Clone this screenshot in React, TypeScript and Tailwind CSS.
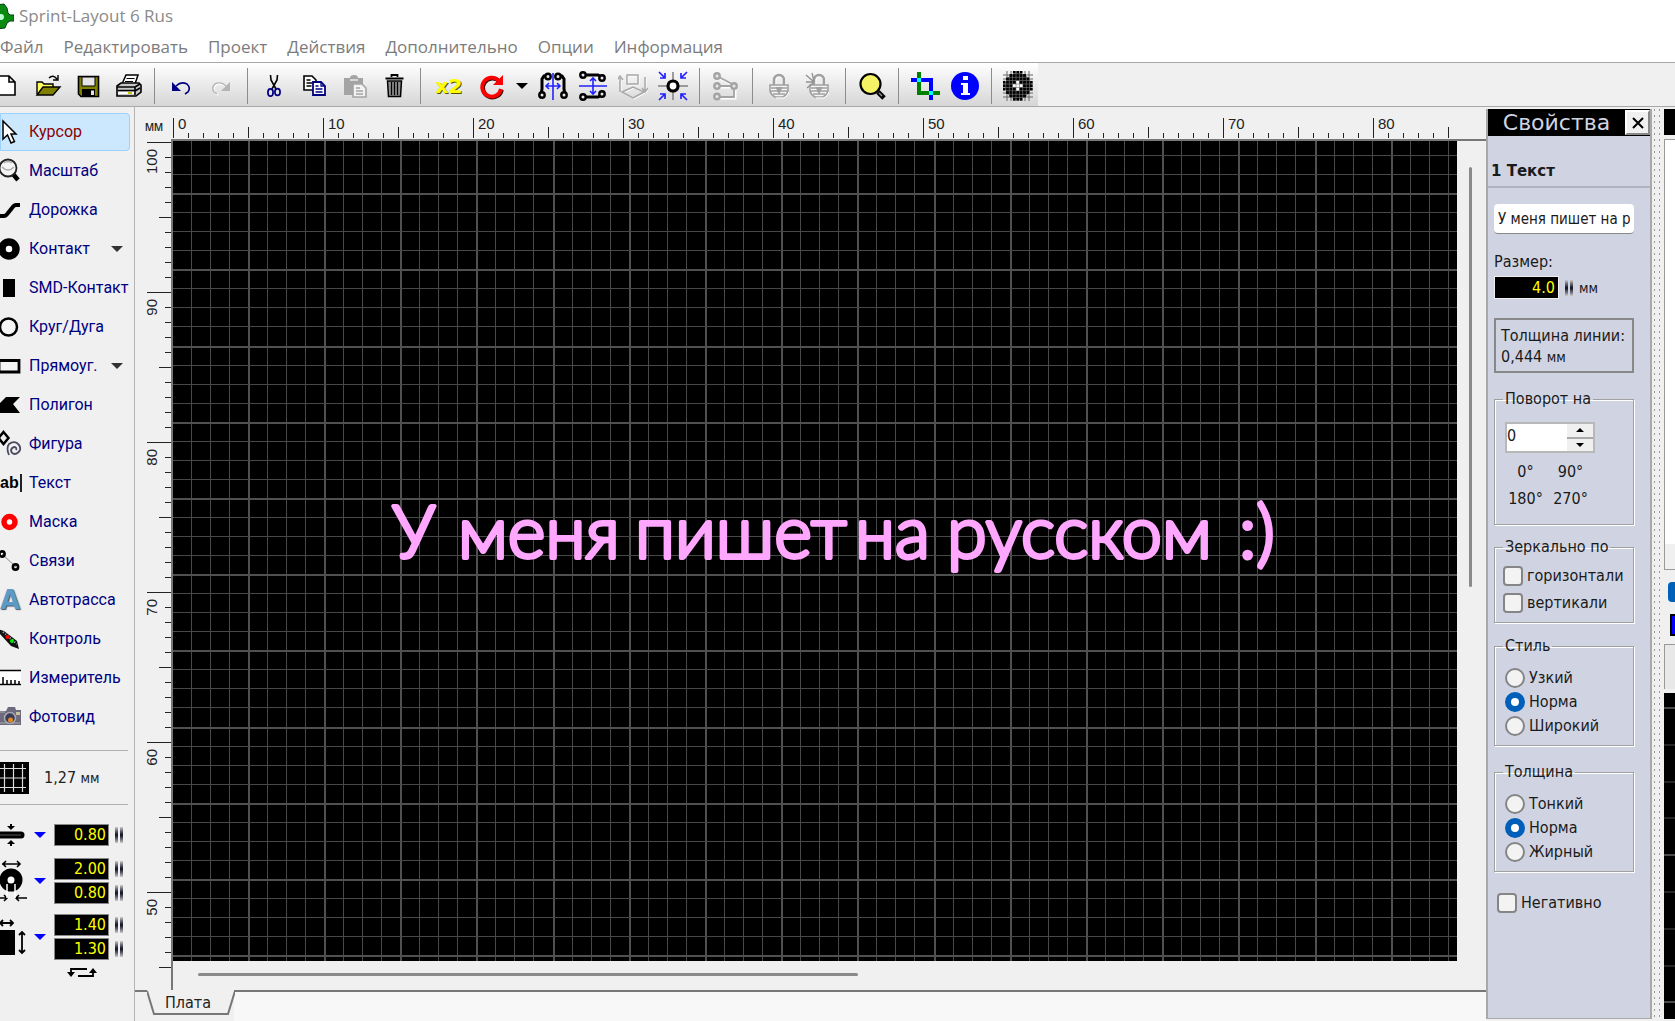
import { useState, type ReactNode } from "react";

// ── data ──────────────────────────────────────────────────────────────────────

const MENU = ["Файл", "Редактировать", "Проект", "Действия", "Дополнительно", "Опции", "Информация"];

const MM = 15; // ruler pixels per millimetre
const CELL = 19.05; // 1.27 mm grid step

// ── icon helpers ──────────────────────────────────────────────────────────────

function Svg({ children, className = "size-[30px]" }: { children: ReactNode; className?: string }) {
  return (
    <svg viewBox="0 0 30 30" className={`shrink-0 ${className}`} fill="none" aria-hidden="true">
      {children}
    </svg>
  );
}

function Padlock() {
  return (
    <>
      <path d="M10 14V9a5 5 0 0 1 10 0v5" stroke="#fff" strokeWidth="2.5" transform="translate(1 1)" />
      <path d="M10 14V9a5 5 0 0 1 10 0v5" stroke="#a0a0a0" strokeWidth="2.5" />
      <path d="M6 14h18v6q-1 4-5 6h-8q-4-2-5-6z" fill="#f4f4f4" stroke="#a0a0a0" strokeWidth="1.6" />
      <path d="M7 17h16M7 20h16M9 23h12" stroke="#a0a0a0" strokeWidth="1.4" />
      <path d="M11.500 16h7L15 24z" fill="#a0a0a0" />
      <path d="M25 21q-1 4-5 6h-8" stroke="#fff" strokeWidth="1" />
    </>
  );
}

function Node({ x, y, color = "#000" }: { x: number; y: number; color?: string }) {
  return <circle cx={x} cy={y} r="2.7" stroke={color} strokeWidth="2.4" fill="#e8e8e8" />;
}

const ICONS: Record<string, ReactNode> = {
  new: <path d="M3 5h13l6 6v13H3zM16 5v6h6" fill="#fff" stroke="#000" strokeWidth="1.6" />,
  open: (
    <>
      <path d="M4 23V11h5l2 2h9v4" fill="#ffff60" stroke="#000" strokeWidth="1.4" />
      <path d="M4 24l6-8h17l-7 8z" fill="#808000" stroke="#000" strokeWidth="1.4" />
      <path d="M16 7q4-4 8 1M25 4v5h-5" stroke="#000" strokeWidth="1.4" />
    </>
  ),
  save: (
    <>
      <path d="M5.500 5.500h20v20H8l-2.500-2.500z" fill="#808000" stroke="#000" strokeWidth="1.6" />
      <path d="M9 6h13v9H9z" fill="#e4e4e4" stroke="#000" />
      <path d="M9 18h13v7H9z" fill="#000" />
      <path d="M18 19.500h3V24h-3z" fill="#e4e4e4" />
    </>
  ),
  print: (
    <>
      <path d="M9 13l4-9h12l-3 9z" fill="#fff" stroke="#000" strokeWidth="1.5" />
      <path d="M13.500 7.500h8M12 10.500h8" stroke="#000" />
      <path d="M4 15l4-3h18l2 2v7l-5 4H4z" fill="#c8c8c8" stroke="#000" strokeWidth="1.6" />
      <path d="M4 16h18v8M22 16l5-3M5 19.500h17M22 20l5-3" stroke="#000" strokeWidth="1.6" />
      <path d="M5 22h16" stroke="#fff" strokeWidth="2" />
      <path d="M15 22h4" stroke="#c8c800" strokeWidth="2" />
    </>
  ),
  undo: (
    <>
      <path d="M10 15q5-5 11-2 4 4 1 8l-3 2" stroke="#000080" strokeWidth="1.6" />
      <path d="M6 11v9h9z" fill="#000080" />
    </>
  ),
  redo: (
    <>
      <path d="M21 16q-5-5-11-2-4 4-1 8l3 2" stroke="#fff" strokeWidth="1.6" />
      <path d="M20 15q-5-5-11-2-4 4-1 8l3 2" stroke="#b4b4b4" strokeWidth="1.4" />
      <path d="M24 11v9h-9z" fill="#b4b4b4" />
    </>
  ),
  cut: (
    <>
      <path d="M11.500 4l.5 5 5 9M18.500 4l-.5 5-5 9" stroke="#000" strokeWidth="1.600" />
      <ellipse cx="11.500" cy="21.500" rx="2.600" ry="3.600" stroke="#000080" strokeWidth="1.700" />
      <ellipse cx="18.500" cy="21" rx="2.600" ry="3.400" stroke="#000080" strokeWidth="1.700" />
    </>
  ),
  copy: (
    <>
      <path d="M5 5h8l4 4v10H5z" fill="#fff" stroke="#000" strokeWidth="1.6" />
      <path d="M7.500 9h4M7.500 12h6M7.500 15h5" stroke="#000" strokeWidth="1.3" />
      <path d="M14 11h8l4 4v9H14z" fill="#fff" stroke="#000080" strokeWidth="1.8" />
      <path d="M22 11v4h4M16.500 15h3M16.500 18h7M16.500 21h7" stroke="#000080" strokeWidth="1.3" />
    </>
  ),
  paste: (
    <>
      <path d="M5 7h6q0-3 4-3t4 3h5v17H5z" fill="#a4a4a4" />
      <path d="M11 9h8" stroke="#e8e8e8" strokeWidth="1.5" />
      <path d="M14 13h9l4 4v9H14z" fill="#f2f2f2" stroke="#a4a4a4" strokeWidth="1.6" />
      <path d="M17 17h4M17 20h7M17 23h7" stroke="#a4a4a4" strokeWidth="1.4" />
    </>
  ),
  trash: (
    <>
      <path d="M12.500 6V4h6v2M6.500 7.500h18" stroke="#000" strokeWidth="1.8" />
      <path d="M8.500 10h14l-1 15.500h-12z" fill="#909090" stroke="#000" strokeWidth="1.5" />
      <path d="M12.500 11v13M15.500 11v13M18.500 11v13" stroke="#000" strokeWidth="1.3" />
    </>
  ),
  rotate: (
    <>
      <path d="M22.500 9.500A9.500 9.500 0 1 0 25 18" stroke="#300" strokeWidth="4" transform="translate(.8 .8)" />
      <path d="M22.500 9.500A9.500 9.500 0 1 0 25 18" stroke="#f00" strokeWidth="3.800" />
      <path d="M27 4v10H17z" fill="#f00" />
    </>
  ),
  mirrorH: (
    <>
      <path d="M15 2v27M8 15h14M11 12l-3 3 3 3M19 12l3 3-3 3" stroke="#22f" strokeWidth="1.6" />
      <path d="M9 5H6L4 8v10l-1 5M21 5h3l2 3v10l1 5" stroke="#000" strokeWidth="3" />
      <Node x={10} y={5.500} /><Node x={20} y={5.500} /><Node x={4} y={24} /><Node x={26} y={24} />
    </>
  ),
  mirrorV: (
    <>
      <path d="M1 15h28M15 7v16M12 10l3-3 3 3M12 20l3 3 3-3" stroke="#22f" strokeWidth="1.6" />
      <path d="M6 4h14l4 2M6 26h14l4-2" stroke="#000" strokeWidth="3" />
      <Node x={5} y={4} /><Node x={24} y={7} /><Node x={5} y={26} /><Node x={24} y={23} />
    </>
  ),
  layer: (
    <>
      <path d="M9 4h11v9H9zM4 21l11-5 11 5-11 6zM2 21V7M-1 9l3-4 3 4M27 6v14M24 17l3 4 3-4" stroke="#fff" transform="translate(1 1)" />
      <path d="M9 4h11v9H9zM4 21l11-5 11 5-11 6zM2 21V7M-1 9l3-4 3 4M27 6v14M24 17l3 4 3-4" stroke="#a8a8a8" strokeWidth="1.5" />
    </>
  ),
  snap: (
    <>
      <path d="M15 1v28M0 15h30" stroke="#808080" strokeWidth="1.5" />
      <path d="M1 1l6 6M7 2v5H2M29 1l-6 6M23 2v5h5M1 29l6-6M7 28v-5H2M29 29l-6-6M23 28v-5h5" stroke="#22f" strokeWidth="1.7" />
      <circle cx="15" cy="15" r="5" fill="#fff" stroke="#000" strokeWidth="3.200" />
    </>
  ),
  route: (
    <>
      <path d="M6 5l17 9v12H7M6 15h17" stroke="#fff" strokeWidth="2" transform="translate(1.500 1.500)" />
      <path d="M6 5l17 9v12H7M6 15h17" stroke="#a4a4a4" strokeWidth="1.800" />
      <Node x={6} y={5} color="#a4a4a4" /><Node x={6} y={15} color="#a4a4a4" />
      <Node x={6} y={25.500} color="#a4a4a4" /><Node x={23} y={15} color="#a4a4a4" />
    </>
  ),
  lock: <Padlock />,
  unlock: (
    <>
      <Padlock />
      <path d="M2 4l8 7M2 11h7M8 2l2 8M3 17l6-5" stroke="#909090" strokeWidth="1.3" />
    </>
  ),
  find: (
    <>
      <path d="M21 21l6 6" stroke="#000" strokeWidth="5" />
      <circle cx="13.500" cy="13" r="10" fill="#f6f266" stroke="#000" strokeWidth="2.200" />
      <path d="M22 22l3 3" stroke="#999" strokeWidth="1.200" />
    </>
  ),
  cross: (
    <>
      <path d="M9 1v21h22" stroke="#008000" strokeWidth="4" />
      <path d="M1 9h20v20" stroke="#00f" strokeWidth="4" />
      <path d="M7 7h4v4H7zM19 20h4v4h-4z" fill="#0ff" />
    </>
  ),
  info: (
    <>
      <circle cx="15" cy="15" r="14" fill="#00f" />
      <path d="M13 5h5v4h-5zM11 12h7v10h2v2h-9v-2h2v-8h-2z" fill="#fff" />
    </>
  ),
};

// round chip-like dot matrix
function MatrixIcon() {
  const dots: ReactNode[] = [];
  for (let r = 0; r < 9; r++) {
    for (let c = 0; c < 9; c++) {
      const d = Math.hypot(r - 4, c - 4);
      const light = d < 1.2;
      if (d < 4.2)
        dots.push(<rect key={`${r}-${c}`} x={c * 3.4 - 0.3} y={r * 3.4 - 0.3} width="2.8" height="2.8" fill={light ? "#fff" : "#000"} />);
    }
  }
  return (
    <Svg>
      <path d="M4 0v30M26 0v30M0 4h30M0 26h30M8 0v30M22 0v30M0 8h30M0 22h30" stroke="#666" />
      <circle cx="15" cy="15" r="13" fill="#777" />
      {dots}
    </Svg>
  );
}

function Separator() {
  return <span className="flex w-[13px] shrink-0 justify-center"><span className="h-9 w-px bg-[#8c8c8c]" /></span>;
}

const TOOLBAR: (string | null)[][] = [
  ["new", "Новый"], ["open", "Открыть"], ["save", "Сохранить"], ["print", "Печать"], [null],
  ["undo", "Отменить"], ["redo", "Повторить"], [null],
  ["cut", "Вырезать"], ["copy", "Копировать"], ["paste", "Вставить"], ["trash", "Удалить"], [null],
  ["x2", "Дублировать"], ["rotate", "Повернуть"], ["more", "Угол поворота"],
  ["mirrorH", "Зеркально по горизонтали"], ["mirrorV", "Зеркально по вертикали"],
  ["layer", "Сменить сторону"], ["snap", "Привязать к сетке"], [null],
  ["route", "Соединения"], [null], ["lock", "Группировать"], ["unlock", "Разгруппировать"], [null],
  ["find", "Найти"], [null], ["cross", "Слои"], ["info", "Сведения"], [null], ["matrix", "Шаблоны"],
];

function Toolbar() {
  return (
    <div className="border-y border-[#a8a8a8] bg-[#f0f0f0]">
      <div className="-ml-3 flex h-[43px] w-max items-center bg-linear-to-b from-white to-[#d6d6d6] pt-0.5">
        {TOOLBAR.map(([id, label], i) =>
          id === null ? (
            <Separator key={i} />
          ) : (
            <button
              key={i}
              aria-label={label ?? undefined}
              className={`flex shrink-0 items-center justify-center ${id === "more" ? "w-[22px]" : id === "x2" ? "w-11" : "w-10"}`}
            >
              {id === "x2" ? (
                <span className="font-['DejaVu_Sans'] text-xl leading-5 font-bold text-[#ff0] [text-shadow:1px_1px_0_#555500]">x2</span>
              ) : id === "more" ? (
                <span className="border-x-[6px] border-t-[6px] border-x-transparent border-t-black" />
              ) : id === "matrix" ? (
                <MatrixIcon />
              ) : (
                <Svg>{ICONS[id as string]}</Svg>
              )}
            </button>
          )
        )}
      </div>
    </div>
  );
}

// ── tool palette ──────────────────────────────────────────────────────────────

const TOOLS: { label: string; menu?: boolean; icon: ReactNode }[] = [
  { label: "Курсор", icon: <path d="M3 3v18l4.500-4 3.500 8 3.500-1.500L11 16h5z" fill="#fff" stroke="#000" strokeWidth="1.500" /> },
  {
    label: "Масштаб",
    icon: (
      <>
        <path d="M13 17l5 6" stroke="#000" strokeWidth="4.500" />
        <circle cx="8" cy="11" r="8.500" fill="#f4f4f4" stroke="#222" strokeWidth="1.800" />
        <path d="M2 10q6 6 12 0M4 6q4-3 8 0" stroke="#aaa" strokeWidth="1.500" />
      </>
    ),
  },
  { label: "Дорожка", icon: <path d="M-1 20h5q2 0 4-3l4-5q2-3 4-3h4" stroke="#000" strokeWidth="4" /> },
  { label: "Контакт", menu: true, icon: <circle cx="9" cy="14" r="7" stroke="#000" strokeWidth="7.500" fill="#fff" /> },
  { label: "SMD-Контакт", icon: <path d="M3 5h12v18H3z" fill="#000" /> },
  { label: "Круг/Дуга", icon: <circle cx="8.500" cy="14" r="8.500" stroke="#000" strokeWidth="2.500" fill="#f4f4f4" /> },
  { label: "Прямоуг.", menu: true, icon: <path d="M-1 8.500h20v11.500H-1z" stroke="#000" strokeWidth="2.800" fill="#f4f4f4" /> },
  { label: "Полигон", icon: <path d="M-2 14L6 6h14l-7 7 7 9H-2z" fill="#000" /> },
  {
    label: "Фигура",
    icon: (
      <>
        <path d="M3.500 2l5 6-5 6-5-6z" stroke="#000" strokeWidth="2.500" />
        <path d="M9 25q-3-7 0-11 4-3 8-1 4 3 3 7-2 4-6 4-3-1-3-4 1-3 4-3 2 1 1 3" stroke="#4a4a60" strokeWidth="1.800" />
      </>
    ),
  },
  { label: "Текст", icon: null },
  { label: "Маска", icon: <circle cx="9.500" cy="14" r="5.500" stroke="#f00" strokeWidth="5.500" fill="#fff" /> },
  {
    label: "Связи",
    icon: (
      <>
        <path d="M2 7l14 13" stroke="#888" />
        <circle cx="2" cy="7" r="2.600" stroke="#000" strokeWidth="2.600" />
        <circle cx="15.500" cy="20" r="2.600" stroke="#000" strokeWidth="2.600" />
      </>
    ),
  },
  { label: "Автотрасса", icon: null },
  {
    label: "Контроль",
    icon: (
      <>
        <path d="M-2 4l6 2 13 10 2 8-8-3L0 9z" fill="#111" />
        <path d="M3 7l14 12" stroke="#aaa" strokeDasharray="1 2" strokeWidth="2" />
        <circle cx="7.500" cy="12" r="2" fill="#f00" />
        <circle cx="12" cy="16" r="2" fill="#0e0" />
      </>
    ),
  },
  {
    label: "Измеритель",
    icon: (
      <>
        <path d="M-1 6h22v16H-1z" fill="#fff" />
        <path d="M-1 6.500h22M-1 20.500h22M3 20v-7M7 20v-4M11 20v-4M15 20v-4M19 20v-3" stroke="#000" strokeWidth="1.500" />
      </>
    ),
  },
  {
    label: "Фотовид",
    icon: (
      <>
        <path d="M-1 8h7l2-4h7l1 3h5v15H-1z" fill="#6c6a7c" />
        <path d="M0 9h5M0 20h20" stroke="#aaa" />
        <path d="M16 9h4v3h-4z" fill="#c8c2a0" />
        <circle cx="10" cy="15" r="5.500" fill="#3c3c58" stroke="#a8a8b4" strokeWidth="1.500" />
        <circle cx="10.500" cy="17" r="2.500" fill="#e08a20" />
      </>
    ),
  },
];

function Knob({ label }: { label: string }) {
  return (
    <button aria-label={label} className="flex h-4 w-2 justify-between">
      <span className="w-[3px] bg-linear-to-b from-[#ccc] via-[#112] to-[#ccc]" />
      <span className="w-[3px] bg-linear-to-b from-[#ccc] via-[#112] to-[#ccc]" />
    </button>
  );
}

function ValueField({ label, initial }: { label: string; initial: string }) {
  return (
    <span className="flex items-center gap-1.5">
      <input
        aria-label={label}
        defaultValue={initial}
        className="h-[22px] w-[55px] border border-[#888] bg-black pr-0.5 text-right font-['DejaVu_Sans_Condensed'] text-base text-[#ff0] outline-none"
      />
      <Knob label={`${label} +/-`} />
    </span>
  );
}

function SizeRow({ title, icon, fields }: { title: string; icon: ReactNode; fields: [string, string][] }) {
  return (
    <div className="flex items-center">
      <svg viewBox="0 0 28 46" className="h-[46px] w-7 shrink-0" fill="none" aria-hidden="true">{icon}</svg>
      <button aria-label={title} className="-ml-px flex w-[27px] shrink-0 justify-center pr-0.5">
        <span className="border-x-[6px] border-t-[6px] border-x-transparent border-t-[#00f]" />
      </button>
      <div className="flex flex-col gap-0.5">
        {fields.map(([label, value]) => <ValueField key={label} label={label} initial={value} />)}
      </div>
    </div>
  );
}

function Sidebar() {
  const [active, setActive] = useState("Курсор");
  return (
    <aside className="w-[135px] shrink-0 border-r border-[#b4b4b4] pt-1.5">
      <nav className="flex flex-col gap-px">
        {TOOLS.map(({ label, icon, menu }) => (
          <button
            key={label}
            onClick={() => setActive(label)}
            className={`mr-1 flex h-[38px] items-center rounded-r border text-left font-['Roboto'] text-base whitespace-nowrap ${
              active === label ? "border-[#99d1ff] bg-[#cce8ff] text-[#8b0000]" : "border-transparent text-[#000080]"
            }`}
          >
            <span className="-ml-px flex w-[29px] shrink-0 items-center">
              {label === "Текст" ? (
                <span aria-hidden="true" className="border-r-2 border-[#222] pr-px font-['Liberation_Sans'] text-base leading-[18px] font-bold text-black">ab</span>
              ) : label === "Автотрасса" ? (
                <span aria-hidden="true" className="font-['DejaVu_Sans'] text-[26px] leading-9 font-bold text-[#5b9bc8] [text-shadow:1px_1px_1px_#456]">A</span>
              ) : (
                <svg viewBox="0 0 22 28" className="h-7 w-[22px]" fill="none" aria-hidden="true">{icon}</svg>
              )}
            </span>
            <span>{label}</span>
            {menu && <span className="mr-1.5 ml-auto border-x-[6px] border-t-[6px] border-x-transparent border-t-[#333]" />}
          </button>
        ))}
      </nav>

      <div className="mt-3.5 mr-1.5 flex h-[55px] items-center border-y border-[#b0b0b0]">
        <button aria-label="Сетка" className="flex">
          <svg viewBox="0 0 29 32" className="h-8 w-[29px]" fill="none" aria-hidden="true">
            <path d="M0 0h29v32H0z" fill="#000" />
            <path d="M4.500 2v28M13.500 2v28M22.500 2v28M0 6.500h26M0 16h26M0 25.500h26" stroke="#ddd" strokeWidth="1.200" />
          </svg>
        </button>
        <span className="ml-[15px] font-['DejaVu_Sans_Condensed'] text-base text-[#222]">
          1,27 <span className="text-sm">мм</span>
        </span>
      </div>

      <div className="mt-[7px] flex flex-col">
        <SizeRow
          title="Ширина дорожки"
          fields={[["Ширина", "0.80"]]}
          icon={
            <>
              <path d="M-4 23h25" stroke="#000" strokeWidth="7" strokeLinecap="round" />
              <path d="M0 23h21" stroke="#555" />
              <path d="M11 12v3M11 31v3" stroke="#000" strokeWidth="2" />
              <path d="M7 14h8l-4 4zM7 32h8l-4-4z" fill="#000" />
            </>
          }
        />
        <SizeRow
          title="Размер контакта"
          fields={[["Внешний диаметр", "2.00"], ["Внутренний диаметр", "0.80"]]}
          icon={
            <>
              <path d="M2 6h18M6 3L3 6l3 3M17 3l3 3-3 3M0 40h7M4 37l3 3-3 3M27 40H16M19 37l-3 3 3 3" stroke="#000" strokeWidth="1.600" />
              <circle cx="11" cy="22" r="7.500" stroke="#000" strokeWidth="8" fill="#fff" />
              <path d="M7 26v14M15 26v14" stroke="#fff" strokeWidth="1.500" />
            </>
          }
        />
        <div className="pt-2.5">
          <SizeRow
            title="Размер SMD"
            fields={[["Ширина SMD", "1.40"], ["Высота SMD", "1.30"]]}
            icon={
              <>
                <path d="M0 9h13M3 6L0 9l3 3M10 6l3 3-3 3M22 18v21M19 21l3-3 3 3M19 36l3 3 3-3" stroke="#000" strokeWidth="1.800" />
                <path d="M0 16h15v25H0z" fill="#000" />
              </>
            }
          />
        </div>
        <button aria-label="Поменять местами" className="mt-[7px] ml-[67px] w-[30px]">
          <svg viewBox="0 0 30 11" className="h-[11px] w-[30px]" fill="none" aria-hidden="true">
            <path d="M20 2H4v4M11 9h15V4" stroke="#000" strokeWidth="1.800" />
            <path d="M0 5h8l-4 5zM22 6h8l-4-5z" fill="#000" />
          </svg>
        </button>
      </div>
    </aside>
  );
}

// ── board ─────────────────────────────────────────────────────────────────────

function HorizontalRuler() {
  return (
    <svg className="h-[31px] w-0 min-w-0 grow" role="img" aria-label="Горизонтальная линейка">
      {Array.from({ length: 86 }, (_, i) => {
        const len = i % 10 === 0 ? 20 : i % 5 === 0 ? 11 : 5;
        return <path key={i} d={`M${i * MM + 0.5} ${30 - len}v${len}`} stroke="#222" />;
      })}
      {Array.from({ length: 9 }, (_, i) => (
        <text key={i} x={i * 10 * MM + 5} y="21" className="fill-[#222] font-['Liberation_Sans'] text-[15px]">{i * 10}</text>
      ))}
    </svg>
  );
}

function VerticalRuler() {
  return (
    <svg className="w-9 shrink-0" role="img" aria-label="Вертикальная линейка">
      {Array.from({ length: 56 }, (_, i) => {
        const len = i % 10 === 0 ? 24 : i % 5 === 0 ? 12 : 6;
        return <path key={i} d={`M${36 - len} ${i * MM + 3.5}h${len}`} stroke="#222" />;
      })}
      {Array.from({ length: 6 }, (_, i) => (
        <text
          key={i}
          transform={`translate(22 ${i * 10 * MM + 10}) rotate(-90)`}
          textAnchor="end"
          className="fill-[#222] font-['Liberation_Sans'] text-[15px]"
        >
          {100 - i * 10}
        </text>
      ))}
    </svg>
  );
}

const WORDS: [string, number][] = [
  ["У", 219], ["меня", 285], ["пишет", 462], ["на", 682], ["русском", 774], [":)", 1066],
];

function Board() {
  return (
    <svg className="w-0 min-w-0 grow bg-black" role="img" aria-label="Плата">
      {Array.from({ length: 110 }, (_, i) => {
        const bold = (i + 1) % 4 === 0;
        const x = Math.round((i + 1) * CELL - 0.5);
        return <path key={i} d={`M${bold ? x : x - 0.5} 0v4000`} stroke={bold ? "#505050" : "#484848"} strokeWidth={bold ? 2 : 1} />;
      })}
      {Array.from({ length: 110 }, (_, i) => {
        const bold = (i + 2) % 4 === 0;
        const y = Math.round(i * CELL + 15);
        return <path key={i} d={`M0 ${bold ? y : y - 0.5}h4000`} stroke={bold ? "#505050" : "#484848"} strokeWidth={bold ? 2 : 1} />;
      })}
      <text
        y="417"
        fill="#ffa6ff"
        stroke="#ffa6ff"
        strokeWidth="4"
        strokeLinejoin="round"
        className="font-['Lato'] text-[72px] font-light"
      >
        {WORDS.map(([word, x]) => <tspan key={word} x={x}>{word}</tspan>)}
      </text>
    </svg>
  );
}

function Workspace() {
  return (
    <main className="flex min-w-0 grow flex-col">
      <div className="flex pt-px">
        <span className="w-[38px] shrink-0 pt-2.5 pl-2.5 font-['Liberation_Mono'] text-[15px] leading-5 text-[#222]">мм</span>
        <HorizontalRuler />
      </div>
      <div className="flex grow">
        <VerticalRuler />
        <div className="flex min-w-0 grow flex-col border-t-2 border-l-2 border-[#777]">
          <div className="flex grow">
            <Board />
            <div className="w-[29px] shrink-0 pt-[26px] pl-3">
              <div className="h-[420px] w-[3px] rounded bg-[#8a8a8a]" />
            </div>
          </div>
          <div className="h-[29px] pt-3 pl-[25px]">
            <div className="h-[3px] w-[660px] rounded bg-[#8a8a8a]" />
          </div>
        </div>
      </div>
      <div className="flex h-[31px]">
        <div className="w-3 border-t-2 border-[#777]" />
        <button className="relative -mr-px h-[26px] w-[88px] pr-1.5 font-['DejaVu_Sans_Condensed'] text-base text-[#222]">
          <svg viewBox="0 0 88 26" preserveAspectRatio="none" className="absolute inset-0 size-full" fill="none" aria-hidden="true">
            <path d="M0 1l7 23h74l7-23" stroke="#777" strokeWidth="2" />
          </svg>
          <span className="relative">Плата</span>
        </button>
        <div className="grow border-t-2 border-[#777] bg-[#f8f8f8]" />
      </div>
    </main>
  );
}

// ── properties ────────────────────────────────────────────────────────────────

function Group({ title, className, children }: { title: string; className: string; children: ReactNode }) {
  return (
    <fieldset className={`mr-4 ml-1.5 border border-[#a0a0a0] shadow-[1px_1px_0_#fff,inset_1px_1px_0_#fff] ${className}`}>
      <legend className="ml-2 px-0.5 leading-5">{title}</legend>
      {children}
    </fieldset>
  );
}

function Check({ label }: { label: string }) {
  return (
    <label className="flex h-[27px] items-center gap-1">
      <input type="checkbox" className="size-5 shrink-0 appearance-none rounded border-2 border-[#858585] bg-[#f3f3f3] checked:bg-[#005fb8]" />
      {label}
    </label>
  );
}

function Radios({ name, options }: { name: string; options: string[] }) {
  return (
    <div className="pt-2.5 pl-2.5">
      {options.map((option) => (
        <label key={option} className="flex h-6 items-center gap-1">
          <input
            type="radio"
            name={name}
            defaultChecked={option === "Норма"}
            className="size-5 shrink-0 appearance-none rounded-full border-2 border-[#858585] bg-[#f3f3f3] checked:border-[6px] checked:border-[#005fb8] checked:bg-white"
          />
          {option}
        </label>
      ))}
    </div>
  );
}

function Properties() {
  const [angle, setAngle] = useState("0");
  const step = (d: number) => setAngle(String((Number(angle) || 0) + d));
  return (
    <aside className="mt-0.5 mb-0.5 w-[166px] shrink-0 border-x-2 border-b border-[#a8a8a8] bg-[#d0d4e2] font-['DejaVu_Sans_Condensed'] text-base text-[#1a1a1a]">
      <header className="flex h-[27px] items-center justify-end bg-black">
        <h2 className="grow text-center font-['DejaVu_Sans'] text-[22px] leading-6 text-[#d0d4e2]">Свойства</h2>
        <button aria-label="Закрыть" className="flex size-[25px] shrink-0 items-center justify-center border-2 border-t-white border-r-[#888] border-b-[#888] border-l-white bg-[#f0f0f0]">
          <svg viewBox="0 0 12 12" className="size-3" fill="none" aria-hidden="true">
            <path d="M1 1l10 10M11 1L1 11" stroke="#000" strokeWidth="2" />
          </svg>
        </button>
      </header>
      <h3 className="border-b-2 border-[#b0b3be] pt-6 pb-1 pl-[3px] font-['DejaVu_Sans'] text-[15px] leading-[22px] font-bold">1 Текст</h3>

      <div className="pt-4 pr-4 pl-1.5">
        <input
          aria-label="Текст"
          defaultValue="У меня пишет на русском :)"
          className="block h-[30px] w-full rounded-sm border-b border-[#888] bg-white px-1 text-[15px] outline-none"
        />
        <label htmlFor="size" className="mt-[18px] block leading-5">Размер:</label>
        <div className="mt-1 flex items-center gap-1.5">
          <input
            id="size"
            defaultValue="4.0"
            className="h-[23px] w-[65px] border border-[#eee] bg-black pr-[3px] text-right text-[#ff0] outline-none"
          />
          <Knob label="Размер +/-" />
          <span className="text-sm">мм</span>
        </div>
        <p className="mt-[19px] border-2 border-[#888] px-[5px] pt-[5px] pb-1 leading-[21px] whitespace-nowrap">
          Толщина линии:
          <br />
          0,444 <span className="text-sm">мм</span>
        </p>
      </div>

      <Group title="Поворот на" className="mt-4 h-[136px]">
        <div className="mt-[13px] ml-2.5 flex h-[31px] w-[90px] border-2 border-[#b8b8b8] bg-white">
          <input
            aria-label="Угол поворота"
            value={angle}
            onChange={(e) => setAngle(e.target.value)}
            className="w-[60px] pb-1 outline-none"
          />
          <span className="flex grow flex-col gap-0.5 bg-[#aaa]">
            <button aria-label="Больше" onClick={() => step(1)} className="flex grow items-center justify-center bg-[#f0f0f0]">
              <span className="border-x-4 border-b-4 border-x-transparent border-b-black" />
            </button>
            <button aria-label="Меньше" onClick={() => step(-1)} className="flex grow items-center justify-center bg-[#f0f0f0]">
              <span className="border-x-4 border-t-4 border-x-transparent border-t-black" />
            </button>
          </span>
        </div>
        <div className="mt-[5px] ml-2 grid w-[90px] grid-cols-2 leading-[27px]">
          {[0, 90, 180, 270].map((a) => (
            <button key={a} onClick={() => setAngle(String(a))}>{a}°</button>
          ))}
        </div>
      </Group>

      <Group title="Зеркально по" className="mt-3 h-[86px]">
        <div className="pt-[5px] pl-2">
          <Check label="горизонтали" />
          <Check label="вертикали" />
        </div>
      </Group>

      <Group title="Стиль" className="mt-[13px] h-[110px]">
        <Radios name="style" options={["Узкий", "Норма", "Широкий"]} />
      </Group>

      <Group title="Толщина" className="mt-4 h-[110px]">
        <Radios name="weight" options={["Тонкий", "Норма", "Жирный"]} />
      </Group>

      <div className="mt-[17px] ml-[9px]">
        <Check label="Негативно" />
      </div>
    </aside>
  );
}

function DockEdge() {
  return (
    <>
      <div className="w-3 shrink-0 bg-[radial-gradient(circle,#999_1px,transparent_1px)] bg-[length:5px_6px]" />
      <div className="flex w-[11px] shrink-0 flex-col overflow-hidden pt-0.5 pb-0.5">
        <div className="h-[26px] bg-black" />
        <div className="mt-1 h-[405px] border-t border-l border-[#999] bg-white" />
        <div className="h-[26px] border-b border-l border-[#999]" />
        <input type="checkbox" defaultChecked aria-label="Слой" className="mt-3 ml-1 size-5 shrink-0 appearance-none rounded bg-[#005fb8]" />
        <div className="mt-3 ml-1.5 h-[22px] w-3 shrink-0 border-2 border-black bg-[#00f]" />
        <div className="mt-2 mb-1 h-[45px] border-t border-l border-[#999] bg-[#e8e8e8]" />
        <svg className="h-0 w-full grow bg-black" aria-hidden="true">
          {Array.from({ length: 30 }, (_, i) => (
            <path key={i} d={`M0 ${15 + Math.round(i * 36.8)}h11`} stroke="#4a4a4a" strokeWidth={i % 4 === 0 ? 2 : 1} />
          ))}
        </svg>
      </div>
    </>
  );
}

// ── app ───────────────────────────────────────────────────────────────────────

export default function App() {
  return (
    <div className="flex min-h-screen flex-col overflow-hidden bg-[#f0f0f0]">
      <header className="bg-white">
        <div className="flex h-8 items-center font-['Open_Sans'] text-[17px] text-[#8a8a8a]">
          <svg viewBox="0 0 14 26" className="mr-[5px] h-[26px] w-3.5" fill="none" aria-hidden="true">
            <path d="M-4 2l8-1 3 4 1 5 2 2h4v6h-4l-3 2-2 5-9 1z" fill="#0a8a10" stroke="#064010" />
            <circle cx="1" cy="14" r="3" fill="#bfc" />
          </svg>
          <h1>Sprint-Layout 6 Rus</h1>
        </div>
        <nav className="flex h-[30px] items-center gap-5 font-['Open_Sans'] text-[17px] text-[#7c7c7c]">
          {MENU.map((item) => <button key={item}>{item}</button>)}
        </nav>
      </header>
      <Toolbar />
      <div className="flex grow">
        <Sidebar />
        <Workspace />
        <Properties />
        <DockEdge />
      </div>
    </div>
  );
}
